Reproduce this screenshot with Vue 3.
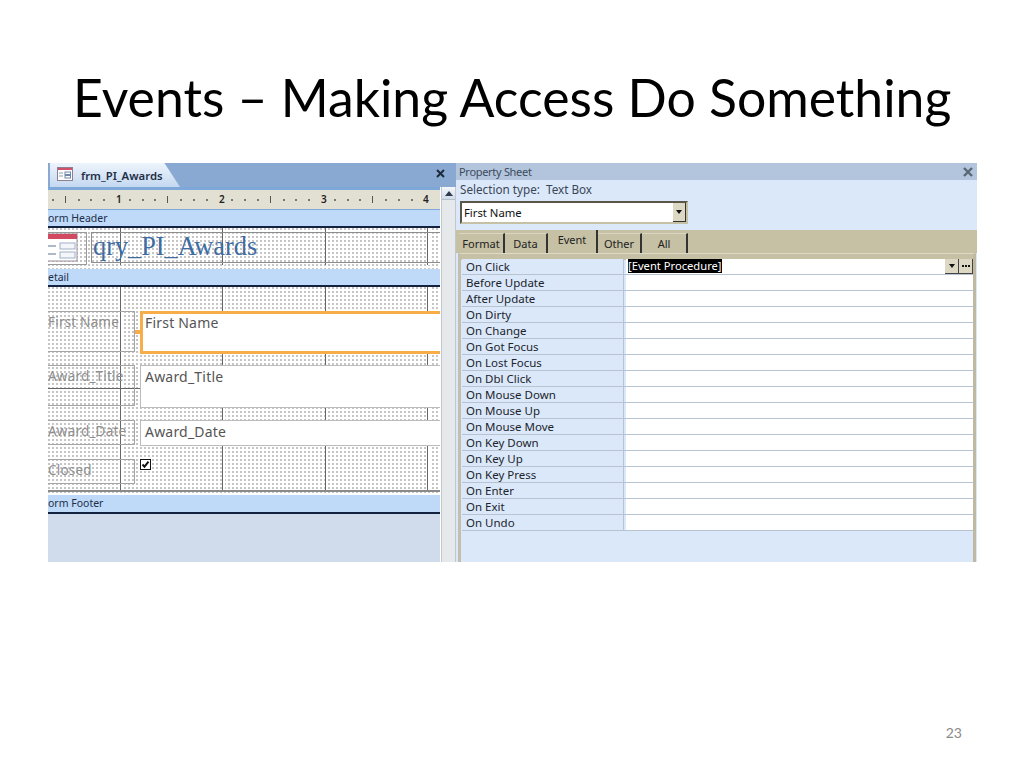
<template>
  <div class="slide">
    <h1 class="titulo">Events – Making Access Do Something</h1>

    <div class="captura">
      <section class="formulario">
        <div class="barra-tab">
          <div class="tab">
            <svg class="tab-icono" width="16" height="14" viewBox="0 0 16 14">
              <rect x="0.5" y="0.5" width="15" height="13" fill="#fff" stroke="#8d7f95" />
              <rect x="1" y="1" width="14" height="2" fill="#d0506a" />
              <path d="M2 6h4M2 9h4" stroke="#8a9cb5" />
              <rect x="8" y="5" width="5.5" height="2.5" fill="#fff" stroke="#6c87aa" />
              <rect x="8" y="8.5" width="5.5" height="2.5" fill="#fff" stroke="#6c87aa" />
            </svg>
            <span>frm_PI_Awards</span>
          </div>
          <svg class="cerrar" width="9" height="9" viewBox="0 0 9 9">
            <path d="M1 1l7 7M8 1l-7 7" stroke="#1c2a3a" stroke-width="2" />
          </svg>
        </div>

        <div class="cuerpo">
          <div class="disenio">
            <div class="regla">
              <template v-for="m in marcasRegla" :key="m.x">
                <span v-if="m.tipo === 'num'" class="regla-num" :style="{ left: m.x + 'px' }">{{ m.txt }}</span>
                <i v-else :class="m.tipo" :style="{ left: m.x + 'px' }"></i>
              </template>
            </div>

            <div class="banda">orm Header</div>
            <div class="lienzo lienzo-cabecera">
              <i v-for="x in lineasV" :key="x" class="linea-v" :style="{ left: x + 'px' }"></i>
              <div class="caja-icono">
                <svg width="31" height="31" viewBox="0 0 31 31">
                  <rect x="-4" y="1" width="33" height="27" fill="#fff" stroke="#9c8c9a" />
                  <rect x="-4" y="1" width="33" height="5" fill="#d24a62" />
                  <path d="M0 13h8M0 21h8" stroke="#aeb9c8" stroke-width="2" />
                  <rect x="12" y="10" width="15" height="6" fill="#f4f6fa" stroke="#9fb0c6" />
                  <rect x="12" y="19" width="15" height="6" fill="#f4f6fa" stroke="#9fb0c6" />
                </svg>
              </div>
              <div class="caja-titulo">qry_PI_Awards</div>
            </div>

            <div class="banda">etail</div>
            <div class="lienzo lienzo-detalle">
              <i v-for="x in lineasV" :key="x" class="linea-v" :style="{ left: x + 'px' }"></i>
              <i class="linea-h"></i>
              <i class="linea-pie"></i>
              <template v-for="c in controles" :key="c.etiqueta">
                <div class="etiqueta" :style="{ top: c.top + 'px', height: c.alto + 'px' }">{{ c.etiqueta }}</div>
                <div
                  v-if="c.texto"
                  class="texto"
                  :class="{ activo: c.activo }"
                  :style="{ top: c.top + 'px', height: c.altoTexto + 'px' }"
                >{{ c.texto }}</div>
              </template>
              <i class="asa"></i>
              <div class="check">
                <svg width="11" height="11" viewBox="0 0 11 11">
                  <rect x="0.5" y="0.5" width="10" height="10" fill="#fff" stroke="#111" />
                  <path d="M2.5 5.5l2 2.2 4-5" fill="none" stroke="#111" stroke-width="2" />
                </svg>
              </div>
            </div>

            <div class="banda banda-pie">orm Footer</div>
            <div class="fondo-form"></div>
          </div>

          <div class="scroll">
            <div class="scroll-btn">
              <svg width="8" height="5" viewBox="0 0 8 5"><path d="M4 0l4 5H0z" fill="#2d3a4a" /></svg>
            </div>
          </div>
        </div>
      </section>

      <section class="propiedades">
        <div class="prop-titulo">
          <span>Property Sheet</span>
          <svg width="10" height="10" viewBox="0 0 10 10">
            <path d="M1 1l8 8M9 1l-8 8" stroke="#5b6675" stroke-width="2.4" />
          </svg>
        </div>
        <div class="prop-seleccion">
          <div class="tipo-sel">Selection type:&nbsp; Text Box</div>
          <div class="combo">
            <span>First Name</span>
            <b class="combo-btn">
              <svg width="6" height="4" viewBox="0 0 6 4"><path d="M0 0h6L3 4z" fill="#111" /></svg>
            </b>
          </div>
        </div>
        <div class="tabs">
          <span
            v-for="t in pestanas"
            :key="t.nombre"
            class="pestana"
            :class="{ activa: t.activa }"
            :style="{ width: t.ancho + 'px' }"
          >{{ t.nombre }}</span>
        </div>
        <div class="hoja">
          <div class="filas">
            <div v-for="(f, i) in eventos" :key="f" class="fila">
              <div class="fila-nombre">{{ f }}</div>
              <div class="fila-valor">
                <template v-if="i === 0">
                  <span class="seleccionado">[Event Procedure]</span>
                  <b class="mini-btn">
                    <svg width="6" height="4" viewBox="0 0 6 4"><path d="M0 0h6L3 4z" fill="#111" /></svg>
                  </b>
                  <b class="mini-btn">
                    <svg width="8" height="2" viewBox="0 0 8 2"><path d="M0 0h2v2H0zM3 0h2v2H3zM6 0h2v2H6z" fill="#111" /></svg>
                  </b>
                </template>
              </div>
            </div>
          </div>
        </div>
      </section>
    </div>

    <div class="numero">23</div>
  </div>
</template>

<script setup>
const lineasV = [72, 174, 277, 379]

const marcasRegla = []
for (let i = 0; i < 33; i++) {
  const x = 4 + i * 12.81
  if (x > 388) break
  if (i % 8 === 5) marcasRegla.push({ tipo: 'num', x: Math.round(x), txt: (i + 3) / 8 })
  else if (i % 8 === 1) marcasRegla.push({ tipo: 'raya', x: Math.round(x) })
  else marcasRegla.push({ tipo: 'punto', x: Math.round(x) })
}

const controles = [
  { etiqueta: 'First Name', texto: 'First Name', top: 24, alto: 41, altoTexto: 43, activo: true },
  { etiqueta: 'Award_Title', texto: 'Award_Title', top: 78, alto: 41, altoTexto: 43 },
  { etiqueta: 'Award_Date', texto: 'Award_Date', top: 133, alto: 25, altoTexto: 26 },
  { etiqueta: 'Closed', top: 172, alto: 25 }
]

const pestanas = [
  { nombre: 'Format', ancho: 46 },
  { nombre: 'Data', ancho: 43 },
  { nombre: 'Event', ancho: 50, activa: true },
  { nombre: 'Other', ancho: 44 },
  { nombre: 'All', ancho: 46 }
]

const eventos = [
  'On Click',
  'Before Update',
  'After Update',
  'On Dirty',
  'On Change',
  'On Got Focus',
  'On Lost Focus',
  'On Dbl Click',
  'On Mouse Down',
  'On Mouse Up',
  'On Mouse Move',
  'On Key Down',
  'On Key Up',
  'On Key Press',
  'On Enter',
  'On Exit',
  'On Undo'
]
</script>

<style>
html,
body {
  margin: 0;
  background: #fff;
}
</style>

<style scoped>
.slide {
  position: relative;
  width: 1024px;
  height: 768px;
  overflow: hidden;
  background: #fff;
  font-family: "Noto Sans", sans-serif;
}

.titulo {
  margin: 0;
  padding: 66px 0 0 73px;
  height: 163px;
  box-sizing: border-box;
  font-family: Lato, sans-serif;
  font-weight: 400;
  font-size: 51.7px;
  line-height: 62px;
  color: #000;
  white-space: nowrap;
}

.captura {
  display: flex;
  margin-left: 48px;
  width: 929px;
  height: 399px;
}

.formulario {
  width: 408px;
  display: flex;
  flex-direction: column;
}

.barra-tab {
  height: 24px;
  flex: none;
  display: flex;
  align-items: stretch;
  justify-content: space-between;
  background: #8aa9d2;
}

.tab {
  width: 130px;
  margin-left: 2px;
  padding-left: 7px;
  box-sizing: border-box;
  display: flex;
  align-items: center;
  gap: 8px;
  background: linear-gradient(#eef4fc, #c4d8f0);
  clip-path: polygon(0 0, 88% 0, 100% 100%, 0 100%);
  font-size: 11.3px;
  font-weight: 600;
  color: #1f2f45;
}

.tab-icono {
  margin-top: -3px;
}

.cerrar {
  align-self: center;
  margin-right: 11px;
  margin-top: -3px;
}

.cuerpo {
  flex: 1;
  display: flex;
  min-height: 0;
}

.disenio {
  width: 392px;
  display: flex;
  flex-direction: column;
  background: #d0dcec;
}

.regla {
  position: relative;
  flex: none;
  height: 19px;
  background: #e2e0d2;
  border-top: 3px solid #7fa8da;
  border-bottom: 1px solid #7fa8da;
}

.regla-num {
  position: absolute;
  top: 3px;
  font-size: 10px;
  line-height: 13px;
  font-weight: 600;
  color: #222;
}

.punto {
  position: absolute;
  top: 9px;
  width: 2px;
  height: 2px;
  background: #777;
}

.raya {
  position: absolute;
  top: 6px;
  width: 1px;
  height: 7px;
  background: #555;
}

.banda {
  flex: none;
  height: 18px;
  padding-top: 1px;
  box-sizing: border-box;
  background: #bfd9f9;
  border-bottom: 2px solid #13233f;
  font-size: 10.5px;
  line-height: 15px;
  color: #1d2f48;
}

.lienzo {
  position: relative;
  flex: none;
  overflow: hidden;
  background-color: #fff;
  background-image: radial-gradient(circle at 1px 1px, #888 0.5px, transparent 0.9px);
  background-size: 4px 4px;
}

.lienzo-cabecera {
  height: 41px;
}

.lienzo-detalle {
  height: 208px;
}

.linea-v {
  position: absolute;
  top: 0;
  bottom: 4px;
  width: 1px;
  background: #666;
  border-right: 2px solid #fff;
}

.caja-icono {
  position: absolute;
  left: 0;
  top: 4px;
  width: 38px;
  height: 31px;
  border: 1px solid #9a9a9a;
  border-left: 0;
}

.caja-titulo {
  position: absolute;
  left: 43px;
  top: 4px;
  width: 349px;
  height: 31px;
  border: 1px solid #8d8d8d;
  border-right: 0;
  padding-left: 1px;
  box-sizing: border-box;
  font-family: "Liberation Serif", serif;
  font-size: 26.3px;
  line-height: 28px;
  color: #3f6ca3;
}

.linea-h {
  position: absolute;
  left: 0;
  top: 101px;
  width: 92px;
  height: 1px;
  background: #666;
}

.linea-pie {
  position: absolute;
  left: 0;
  right: 0;
  top: 203px;
  height: 2px;
  background: #8a8a8a;
}

.etiqueta {
  position: absolute;
  left: 0;
  width: 87px;
  box-sizing: border-box;
  border: 1px solid #a5a5a5;
  border-left: 0;
  font-size: 13.5px;
  letter-spacing: 0.2px;
  line-height: 20px;
  color: #8e8e8e;
}

.texto {
  position: absolute;
  left: 92px;
  right: 0;
  box-sizing: border-box;
  padding: 1px 0 0 4px;
  background: #fff;
  border: 1px solid #bcbcbc;
  border-right: 0;
  font-size: 14px;
  letter-spacing: 0.2px;
  line-height: 20px;
  color: #555;
}

.texto.activo {
  border: 3px solid #f6ad4a;
  border-right: 0;
  padding: 0 0 0 2px;
  line-height: 17px;
}

.asa {
  position: absolute;
  left: 87px;
  top: 43px;
  width: 5px;
  height: 4px;
  background: #f6ad4a;
}

.check {
  position: absolute;
  left: 92px;
  top: 172px;
  width: 11px;
  height: 11px;
  line-height: 0;
}

.banda-pie {
  height: 19px;
}

.fondo-form {
  flex: 1;
}

.scroll {
  width: 15px;
  margin-left: 1px;
  box-sizing: border-box;
  background: #e6e9ec;
  border-left: 1px solid #c3c7cc;
  border-right: 1px solid #c3c7cc;
}

.scroll-btn {
  height: 12px;
  background: linear-gradient(#f4f7fb, #cfdbea);
  border-bottom: 1px solid #b4bfcc;
  display: flex;
  align-items: center;
  justify-content: center;
}

.propiedades {
  width: 521px;
  display: flex;
  flex-direction: column;
  background: #dbe8fa;
}

.prop-titulo {
  flex: none;
  height: 17px;
  display: flex;
  align-items: center;
  justify-content: space-between;
  padding: 0 4px 0 3px;
  background: #b2c5dd;
  font-size: 11px;
  letter-spacing: -0.3px;
  color: #3d4a5c;
}

.prop-seleccion {
  flex: none;
  height: 50px;
  padding: 1px 0 0 4px;
  box-sizing: border-box;
}

.tipo-sel {
  height: 20px;
  font-size: 11.7px;
  line-height: 17px;
  color: #3a4656;
}

.combo {
  width: 228px;
  height: 23px;
  padding-left: 2px;
  box-sizing: border-box;
  display: flex;
  align-items: center;
  justify-content: space-between;
  background: #fff;
  border: 2px solid #c6c0a4;
  border-top-color: #5a5648;
  border-left-color: #5a5648;
  font-size: 11.3px;
  color: #111;
}

.combo-btn {
  width: 13px;
  height: 19px;
  display: flex;
  align-items: center;
  justify-content: center;
  background: #dcd8c4;
  border-right: 1px solid #333;
  border-bottom: 1px solid #333;
  box-sizing: border-box;
}

.tabs {
  flex: none;
  height: 23px;
  padding-left: 3px;
  display: flex;
  align-items: flex-end;
  background: #c6c0a4;
  font-size: 11px;
  color: #222;
}

.pestana {
  height: 20px;
  line-height: 19px;
  box-sizing: border-box;
  text-align: center;
  border-right: 2px solid #333;
  border-top: 1px solid #dad6c2;
}

.pestana.activa {
  height: 23px;
  line-height: 20px;
  padding-bottom: 3px;
  border-top: 0;
}

.hoja {
  flex: 1;
  box-sizing: border-box;
  border-top: 1px solid #dedac8;
  border-left: 3px solid #c2c0ac;
  border-right: 3px solid #bdb9a2;
  margin-left: 2px;
  margin-right: 1px;
  background: linear-gradient(#c6c0a4 6px, #dbe8fa 6px);
  padding-top: 5px;
}

.filas {
  margin-left: 1px;
}

.fila {
  display: flex;
  height: 16px;
  box-sizing: border-box;
  border-bottom: 1px solid #b7c3cf;
}

.fila-nombre {
  width: 162px;
  flex: none;
  padding-left: 4px;
  box-sizing: border-box;
  border-right: 1px solid #b7c3cf;
  background: #dbe8fa;
  font-size: 11.5px;
  line-height: 15px;
  color: #20242a;
}

.fila-valor {
  flex: 1;
  margin-left: 2px;
  padding-left: 2px;
  display: flex;
  align-items: stretch;
  background: #fff;
  font-size: 11.2px;
  line-height: 14px;
}

.seleccionado {
  background: #000;
  color: #fff;
  height: 14px;
  margin-right: auto;
  white-space: nowrap;
}

.mini-btn {
  width: 14px;
  height: 15px;
  display: flex;
  align-items: center;
  justify-content: center;
  box-sizing: border-box;
  background: #dcd8c4;
  border-right: 1px solid #444;
  border-bottom: 1px solid #444;
}

.numero {
  position: absolute;
  right: 62px;
  top: 724px;
  font-family: Lato, sans-serif;
  font-size: 14px;
  line-height: 18px;
  color: #8a8a8a;
}
</style>
